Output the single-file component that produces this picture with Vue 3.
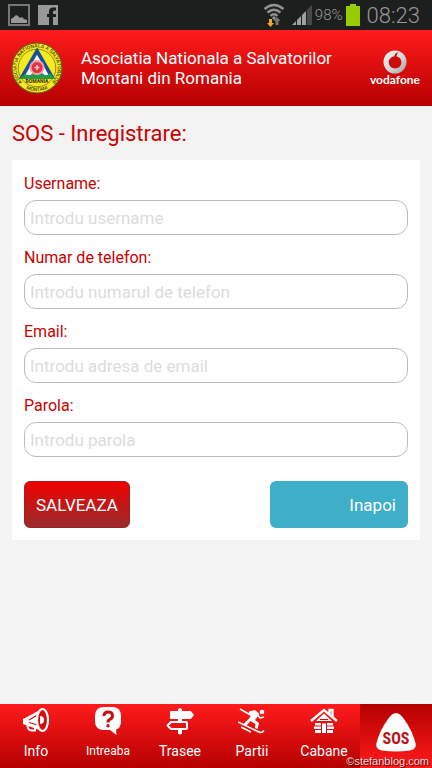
<script setup>
import { reactive } from 'vue'

const fields = [
  { id: 'username', label: 'Username:', hint: 'Introdu username', type: 'text' },
  { id: 'phone', label: 'Numar de telefon:', hint: 'Introdu numarul de telefon', type: 'tel' },
  { id: 'email', label: 'Email:', hint: 'Introdu adresa de email', type: 'email' },
  { id: 'password', label: 'Parola:', hint: 'Introdu parola', type: 'password' },
]
const form = reactive({ username: '', phone: '', email: '', password: '' })
</script>

<template>
  <div class="screen">
    <div class="status">
      <div class="status-group">
        <svg width="22" height="22" viewBox="0 0 22 22">
          <rect x="1" y="1" width="20" height="20" fill="none" stroke="#777" stroke-width="2" />
          <path d="M3 19v-4l3-2 2-2 2 1 2 2 2-1 2 2 3 1v3z" fill="#999" />
        </svg>
        <svg width="20" height="20" viewBox="0 0 20 20">
          <path d="M0 0h20v20h-5v-8h3V9h-3V7q0-1.500 1.500-1.500H18v-3h-3q-4 0-4 4V9H9v3h2v8H0z" fill="#999" />
        </svg>
      </div>
      <div class="status-group right">
        <svg width="22" height="24" viewBox="0 0 22 24">
          <g fill="none" stroke="#929292" stroke-width="2.400">
            <path d="M1.500 6Q11-2 20.500 6" />
            <path d="M4.500 9.500Q11 3.800 17.500 9.500" />
            <path d="M7.500 12.800Q11 9.500 14.500 12.800" />
          </g>
          <circle cx="11" cy="15" r="1.700" fill="#929292" />
          <path d="M6 16h3v4h2l-3.500 4L4 20h2z" fill="#f6a623" />
          <path d="M12.500 22v-4h-2l3.500-4 3.500 4h-2v4z" fill="#777" />
        </svg>
        <svg class="signal" width="20" height="20" viewBox="0 0 20 20">
          <path d="M0 20l4-4v4zM5 15l4-4v9H5zM10 10l4-4v14h-4z" fill="#a0a0a0" />
          <path d="M15 5l5-5v20h-5z" fill="#484848" />
        </svg>
        <span class="percent">98%</span>
        <svg class="battery" width="14" height="22" viewBox="0 0 14 22">
          <path d="M4 0h6v2h4v20H0V2h4z" fill="#99cc00" />
        </svg>
        <span class="clock">08:23</span>
      </div>
    </div>

    <header class="header">
      <svg class="emblem" width="52" height="52" viewBox="0 0 52 52">
        <defs>
          <path id="ring-top" d="M11.900 40.900A20.500 20.500 0 1 1 40.100 40.900" />
          <path id="ring-bottom" d="M10.100 43A23.500 23.500 0 0 0 41.900 43" />
        </defs>
        <circle cx="26" cy="26" r="25" fill="#f5ea1e" stroke="#665e20" stroke-width="1.200" />
        <circle cx="26" cy="26" r="18.800" fill="#f5ea1e" stroke="#777020" stroke-width=".8" />
        <path d="M26 9L41 35H11z" fill="#fff" stroke="#164f9d" stroke-width="3.600" />
        <path d="M8 37l6-5 4 2 4-3 4 2 5-2 4 3 4-3 5 6z" fill="#259a48" />
        <circle cx="26" cy="25.500" r="7.500" fill="#f4a0a0" />
        <circle cx="26" cy="25.500" r="5.500" fill="#dc3549" />
        <path d="M26 23v5M23.500 25.500h5" stroke="#f8c0c0" stroke-width="1.600" />
        <text x="26" y="41" class="emblem-country" text-anchor="middle">ROMANIA</text>
        <text class="emblem-ring"><textPath href="#ring-top" startOffset="50%" text-anchor="middle">ASOCIATIA NATIONALA A SALVATORILOR</textPath></text>
        <text class="emblem-ring"><textPath href="#ring-bottom" startOffset="50%" text-anchor="middle">MONTANI</textPath></text>
      </svg>
      <h1 class="brand">Asociatia Nationala a Salvatorilor<br />Montani din Romania</h1>
      <div class="sponsor">
        <svg width="24" height="24" viewBox="0 0 24 24">
          <defs>
            <linearGradient id="silver" x1="0" y1="0" x2="1" y2="1">
              <stop offset="0" stop-color="#f4f4f4" />
              <stop offset=".6" stop-color="#d2d2d2" />
              <stop offset="1" stop-color="#999" />
            </linearGradient>
          </defs>
          <circle cx="12" cy="12" r="11.500" fill="url(#silver)" />
          <path d="M15.800 2.200C12.800 2.600 11.400 4.200 11.500 6.300 7.800 6.800 5.800 9.500 5.800 12.300c0 3.700 2.800 6.200 6.200 6.200 3.700 0 6.400-2.700 6.400-6.200 0-3-1.800-5-4.700-5.800-.1-2 .5-3.300 2.100-4.300z" fill="#cf0a0c" />
        </svg>
        <span class="sponsor-name">vodafone</span>
      </div>
    </header>

    <main class="content">
      <h2 class="title">SOS - Inregistrare:</h2>
      <form class="card" @submit.prevent>
        <div v-for="f in fields" :key="f.id" class="field">
          <label :for="f.id">{{ f.label }}</label>
          <input :id="f.id" v-model="form[f.id]" :type="f.type" :placeholder="f.hint" />
        </div>
        <div class="actions">
          <button type="submit" class="save">SALVEAZA</button>
          <button type="button" class="back">Inapoi</button>
        </div>
      </form>
    </main>

    <nav class="nav">
      <a href="#info">
        <svg width="28" height="28" viewBox="0 0 28 28">
          <path d="M1 12L20 2v22L1 17z" fill="#fff" />
          <path d="M7 13l10-6M7 15.500l10 3" stroke="#d40c0c" stroke-width="1.200" />
          <ellipse cx="20.500" cy="13" rx="5.500" ry="11" fill="#d40c0c" stroke="#fff" stroke-width="2.200" />
          <path d="M18 9q4 0 4 4t-4 4z" fill="#fff" />
          <path d="M5.500 18q0 5.500 4.500 5.500h3V21" fill="none" stroke="#fff" stroke-width="2" />
        </svg>
        <span>Info</span>
      </a>
      <a href="#intreaba" class="small">
        <svg width="28" height="28" viewBox="0 0 28 28">
          <path d="M10 0h8q9 0 9 9v5q0 7-5 8.500l.5 5.500-6.500-5h-6q-9 0-9-9V9q0-9 9-9z" fill="#fff" />
          <path d="M10 9q0-4 4.200-4t4.300 3.700q0 2.300-2.300 3.500T14 15.500" fill="none" stroke="#c71010" stroke-width="3" />
          <circle cx="14" cy="18.800" r="1.700" fill="#c71010" />
        </svg>
        <span>Intreaba</span>
      </a>
      <a href="#trasee">
        <svg width="28" height="28" viewBox="0 0 28 28">
          <path d="M12 5V2.500q2-3 4 0V5zM12 12h4v3h-4zM12 23h4v3.500q-2 2-4 0z" fill="#fff" />
          <path d="M5 4h19q1 0 1.500.7L28 8l-2.500 3.300q-.5.7-1.500.7H5q-1 0-1-1V5q0-1 1-1z" fill="#fff" />
          <path d="M5 15h15q1 0 1 1v5q0 1-1 1H5l-3.500-3.500z" fill="none" stroke="#fff" stroke-width="2" stroke-linejoin="round" />
        </svg>
        <span>Trasee</span>
      </a>
      <a href="#partii">
        <svg width="28" height="28" viewBox="0 0 28 28">
          <circle cx="24" cy="5" r="2.300" fill="#fff" />
          <path d="M11 4.500l6-1.500 4.500 4-4.500 6 4 3-1.500 6-2.500-1 .5-4-5-3-4 4.500-3-1.500 6-6 2-4-3.500 1z" fill="#fff" />
          <path d="M2 2l16 9M19 7l3 4 4-1M0 15l21 10q3 1.500 5-1.500M3 20l10 5" fill="none" stroke="#fff" stroke-width="1.500" />
        </svg>
        <span>Partii</span>
      </a>
      <a href="#cabane">
        <svg width="28" height="28" viewBox="0 0 28 28">
          <path d="M1 14L14 3l13 11M19.500 7V3h3v7" fill="none" stroke="#fff" stroke-width="2.400" />
          <path d="M14 6.500l8 7.500H6zM5 16h18v2.500H5zM4 19.500h20V22H4zM5 23h18v3H5z" fill="#fff" />
          <path d="M11 15.500h6V26h-6zM10 12h8v1h-8z" fill="#d40c0c" />
          <path d="M12 16.500h4V26h-4z" fill="#fff" />
        </svg>
        <span>Cabane</span>
      </a>
      <a href="#sos" class="active">
        <svg width="42" height="40" viewBox="0 0 42 40">
          <path d="M21 1q4 0 8 6 8 11 11.500 24 1.500 6.500-5.500 7.500-14 2-28 0-7-1-5.500-7.500Q5 18 13 7q4-6 8-6z" fill="#fff" />
          <text x="21" y="32" text-anchor="middle" class="sos-text">SOS</text>
        </svg>
      </a>
      <span class="watermark">©stefanblog.com</span>
    </nav>
  </div>
</template>

<style>
body {
  margin: 0;
  background: #f3f3f3;
}
</style>

<style scoped>
.screen {
  display: flex;
  flex-direction: column;
  min-height: 100vh;
  font-family: Roboto, "Liberation Sans", sans-serif;
  background: #f3f3f3;
}
.status {
  display: flex;
  justify-content: space-between;
  align-items: center;
  height: 30px;
  padding: 0 12px 0 8px;
  background: #1d1f1e;
  color: #999;
}
.status-group {
  display: flex;
  align-items: center;
  gap: 8px;
}
.right {
  gap: 3px;
}
.signal {
  margin-left: 4px;
}
.percent {
  font-size: 15px;
  font-weight: 300;
}
.clock {
  margin-left: 4px;
  font-size: 22px;
  font-weight: 300;
}
.header {
  display: flex;
  align-items: center;
  height: 76px;
  padding: 0 12px 0 11px;
  box-sizing: border-box;
  background: linear-gradient(#ff1b1b, #b50000);
  color: #fff;
}
.emblem {
  margin: 0 18px 0 0;
}
.emblem-country {
  font-size: 5px;
  font-weight: 700;
  fill: #302a10;
}
.emblem-ring {
  font-size: 5px;
  font-weight: 500;
  fill: #4a4418;
}
.brand {
  flex: 1;
  margin: 0;
  font-size: 17px;
  font-weight: 400;
  line-height: 20px;
}
.sponsor {
  display: flex;
  flex-direction: column;
  align-items: center;
}
.sponsor-name {
  font-family: Lato, Roboto, sans-serif;
  font-size: 12px;
  font-weight: 700;
  line-height: 12px;
}
.content {
  flex: 1;
  padding: 12px;
}
.title {
  margin: 0 0 10px;
  color: #c00;
  font-size: 22px;
  font-weight: 400;
  line-height: 32px;
}
.card {
  display: flex;
  flex-direction: column;
  gap: 11px;
  padding: 12px;
  background: #fff;
}
.field {
  display: flex;
  flex-direction: column;
  gap: 4px;
}
.field label {
  color: #c00;
  font-size: 16px;
  line-height: 24px;
}
.field input {
  width: 100%;
  height: 35px;
  box-sizing: border-box;
  padding: 0 5px;
  border: 1px solid #bbb;
  border-radius: 12px;
  background: #fff;
  color: #333;
  font-family: inherit;
  font-size: 17px;
}
.field input::placeholder {
  color: #dcdcdc;
  opacity: 1;
}
.actions {
  display: flex;
  justify-content: space-between;
  padding-top: 13px;
}
.actions button {
  height: 47px;
  padding: 0 12px;
  border-radius: 6px;
  color: #fff;
  font-family: inherit;
  font-size: 17px;
}
.actions .save {
  padding: 0 11px;
  border: 1px solid #a02020;
  background: linear-gradient(#f00000, #982c2c);
}
.actions .back {
  width: 36%;
  border: 0;
  background: #3eaec9;
  text-align: right;
}
.nav {
  position: relative;
  display: grid;
  grid-template-columns: repeat(6, 1fr);
  height: 64px;
  background: linear-gradient(#ff1b1b, #b50000);
}
.nav a {
  display: flex;
  flex-direction: column;
  align-items: center;
  gap: 8px;
  padding-top: 3px;
  color: #fff;
  font-size: 14px;
  line-height: 16px;
  text-decoration: none;
}
.nav .small {
  font-size: 12px;
}
.nav .active {
  padding-top: 8px;
  background: linear-gradient(#b50000, #ff1b1b);
}
.sos-text {
  font-family: "Roboto Condensed", Roboto, sans-serif;
  font-size: 16px;
  font-weight: 700;
  fill: #b81414;
}
.watermark {
  position: absolute;
  right: 3px;
  bottom: 0;
  color: #f0d8d8;
  font-family: "Liberation Sans", sans-serif;
  font-size: 11px;
  line-height: 13px;
  text-shadow: 1px 1px 1px #400;
}
</style>
